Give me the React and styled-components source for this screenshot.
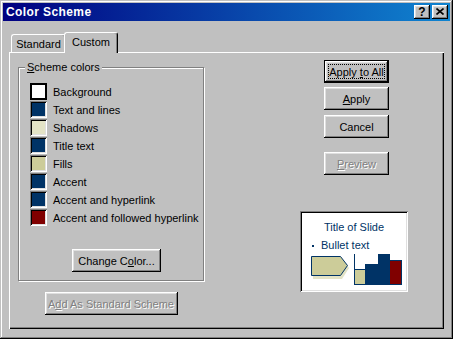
import React from 'react'
import styled, { createGlobalStyle } from 'styled-components'

const GlobalStyle = createGlobalStyle`
  body {
    margin: 0;
    background: #c0c0c0;
  }
`

const schemeColors = [
  { name: 'Background', color: '#ffffff', selected: true },
  { name: 'Text and lines', color: '#003366' },
  { name: 'Shadows', color: '#e3e3c6' },
  { name: 'Title text', color: '#003366' },
  { name: 'Fills', color: '#cccc99' },
  { name: 'Accent', color: '#003366' },
  { name: 'Accent and hyperlink', color: '#003366' },
  { name: 'Accent and followed hyperlink', color: '#800000' },
]

export default function App() {
  return (
    <>
      <GlobalStyle />
      <Window>
        <TitleBar>
          <Title>Color Scheme</Title>
          <TitleButtons>
            <TitleButton>?</TitleButton>
            <TitleButton>
              <svg width="8" height="7" viewBox="0 0 8 7">
                <path d="M0.5 0.5 L7.5 6.5 M7.5 0.5 L0.5 6.5" stroke="#000" strokeWidth="1.6" />
              </svg>
            </TitleButton>
          </TitleButtons>
        </TitleBar>

        <Body>
          <TabRow>
            <Tab>Standard</Tab>
            <Tab $active>Custom</Tab>
          </TabRow>

          <Panel>
            <LeftColumn>
              <Group>
                <GroupLabel><u>S</u>cheme colors</GroupLabel>
                <ColorList>
                  {schemeColors.map(c => (
                    <ColorRow key={c.name}>
                      <Swatch $color={c.color} $selected={c.selected} />
                      <span>{c.name}</span>
                    </ColorRow>
                  ))}
                </ColorList>
                <Button $width={89} $center><span>Change C<u>o</u>lor...</span></Button>
              </Group>
              <Button $width={133} $disabled $top={11}><span>A<u>d</u>d As Standard Scheme</span></Button>
            </LeftColumn>

            <RightColumn>
              <Button $width={65} $default>
                <FocusRing><span>Apply <u>t</u>o All</span></FocusRing>
              </Button>
              <Button $width={65} $top={4}><span><u>A</u>pply</span></Button>
              <Button $width={65} $top={5}><span>Cancel</span></Button>
              <Button $width={65} $top={14} $disabled><span><u>P</u>review</span></Button>

              <Preview>
                <SlideTitle>Title of Slide</SlideTitle>
                <BulletRow>
                  <Bullet />
                  <span>Bullet text</span>
                </BulletRow>
                <svg width="104" height="35" viewBox="0 0 104 35">
                  <polygon points="11,7 40,7 47,16 40,27 11,27" fill="#e3e3c6" />
                  <polygon points="9.5,4.5 38.5,4.5 45.5,13.5 38.5,23.5 9.5,23.5" fill="#cccc99" stroke="#003366" />
                  <rect x="52.5" y="17.5" width="11" height="15" fill="#cccc99" stroke="#003366" />
                  <rect x="63" y="12" width="13" height="21" fill="#003366" />
                  <rect x="76" y="2" width="12" height="31" fill="#003366" />
                  <rect x="87.5" y="8.5" width="12" height="24" fill="#800000" stroke="#003366" />
                  <path d="M52.5 2 L52.5 33" stroke="#003366" />
                </svg>
              </Preview>
            </RightColumn>
          </Panel>
        </Body>
      </Window>
    </>
  )
}

const Window = styled.div`
  width: 453px;
  height: 339px;
  box-sizing: border-box;
  padding: 3px;
  display: flex;
  flex-direction: column;
  background: #c0c0c0;
  box-shadow: inset -1px -1px #000, inset 1px 1px #c0c0c0, inset -2px -2px #808080, inset 2px 2px #fff;
  font-family: "Liberation Sans", Arial, sans-serif;
  font-size: 11px;
  color: #000;
`
const TitleBar = styled.div`
  height: 18px;
  display: flex;
  align-items: center;
  justify-content: space-between;
  padding: 0 2px 0 3px;
  background: linear-gradient(to right, #000080, #1084d0);
`
const Title = styled.div`
  color: #fff;
  font-weight: bold;
  font-size: 12px;
  letter-spacing: 0.4px;
`
const TitleButtons = styled.div`
  display: flex;
  gap: 2px;
`
const TitleButton = styled.div`
  width: 16px;
  height: 14px;
  box-sizing: border-box;
  display: flex;
  align-items: center;
  justify-content: center;
  background: #c0c0c0;
  box-shadow: inset -1px -1px #000, inset 1px 1px #fff, inset -2px -2px #808080, inset 2px 2px #dfdfdf;
  font-weight: bold;
  font-size: 12px;
  padding-bottom: 1px;
`
const Body = styled.div`
  flex: 1;
  display: flex;
  flex-direction: column;
  padding: 11px 6px 7px 6px;
`
const TabRow = styled.div`
  display: flex;
  align-items: flex-end;
  height: 20px;
`
const Tab = styled.div`
  position: relative;
  z-index: ${p => (p.$active ? 1 : 0)};
  box-sizing: border-box;
  width: ${p => (p.$active ? 54 : 55)}px;
  height: ${p => (p.$active ? 21 : 18)}px;
  margin-left: ${p => (p.$active ? -2 : 2)}px;
  margin-bottom: ${p => (p.$active ? -1 : 0)}px;
  display: flex;
  justify-content: center;
  padding-top: 3px;
  background: #c0c0c0;
  border-top: 1px solid #fff;
  border-left: 1px solid #fff;
  border-right: 1px solid #000;
  border-radius: 3px 3px 0 0;
  box-shadow: inset -1px 0 #808080;
`
const Panel = styled.div`
  flex: 1;
  display: flex;
  padding: 8px 0 0 9px;
  box-shadow: inset 1px 1px #fff, inset -1px -1px #000, inset -2px -2px #808080;
`
const LeftColumn = styled.div`
  width: 186px;
  margin-top: 7px;
  display: flex;
  flex-direction: column;
  align-items: center;
`
const Group = styled.div`
  position: relative;
  width: 186px;
  height: 214px;
  box-sizing: border-box;
  border: 1px solid #808080;
  box-shadow: inset 1px 1px #fff, 1px 1px #fff;
  padding: 14px 0 8px 11px;
  display: flex;
  flex-direction: column;
`
const GroupLabel = styled.span`
  position: absolute;
  left: 6px;
  top: -7px;
  padding: 0 2px;
  line-height: 13px;
  background: #c0c0c0;
`
const ColorList = styled.div`
  display: flex;
  flex-direction: column;
`
const ColorRow = styled.div`
  height: 18px;
  display: flex;
  align-items: center;
  gap: 6px;

  span {
    padding-top: 2px;
  }
`
const Swatch = styled.div`
  width: 17px;
  height: 17px;
  box-sizing: border-box;
  background: ${p => p.$color};
  box-shadow: ${p =>
    p.$selected
      ? 'inset 0 0 0 2px #000'
      : 'inset 1px 1px #808080, inset -1px -1px #fff, inset 2px 2px #000, inset -2px -2px #dfdfdf'};
`
const Button = styled.button`
  width: ${p => p.$width}px;
  height: 23px;
  margin: 0;
  margin-top: ${p => (p.$center ? 'auto' : `${p.$top || 0}px`)};
  align-self: ${p => (p.$center ? 'center' : 'auto')};
  box-sizing: border-box;
  padding: 0;
  display: flex;
  align-items: center;
  justify-content: center;
  background: #c0c0c0;
  border: ${p => (p.$default ? '1px solid #000' : 'none')};
  box-shadow: inset -1px -1px #000, inset 1px 1px #fff, inset -2px -2px #808080, inset 2px 2px #dfdfdf;
  font-family: inherit;
  font-size: 11px;
  color: ${p => (p.$disabled ? '#808080' : '#000')};
  text-shadow: ${p => (p.$disabled ? '1px 1px #fff' : 'none')};
`
const FocusRing = styled.span`
  flex: 1;
  align-self: stretch;
  margin: 3px;
  border: 1px dotted #000;
  display: flex;
  align-items: center;
  justify-content: center;
`
const RightColumn = styled.div`
  width: 108px;
  margin-left: 96px;
  display: flex;
  flex-direction: column;
  align-items: flex-start;

  & > button {
    margin-left: 24px;
  }
`
const Preview = styled.div`
  width: 108px;
  height: 81px;
  margin-top: 36px;
  box-sizing: border-box;
  padding: 10px 2px 0 2px;
  background: #fff;
  box-shadow: inset 1px 1px #808080, inset -1px -1px #fff, inset 2px 2px #000, inset -2px -2px #dfdfdf;
  display: flex;
  flex-direction: column;
  color: #003366;
`
const SlideTitle = styled.div`
  text-align: center;
  line-height: 13px;
`
const BulletRow = styled.div`
  display: flex;
  align-items: center;
  gap: 7px;
  margin-top: 5px;
  padding-left: 10px;
  line-height: 13px;
`
const Bullet = styled.span`
  width: 2px;
  height: 2px;
  background: #003366;
`
